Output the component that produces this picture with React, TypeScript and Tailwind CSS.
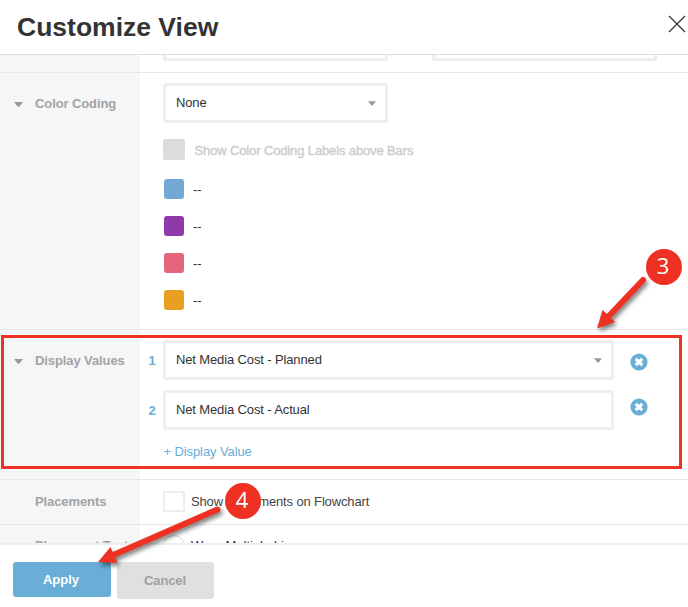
import React from "react";

function Caret({ className = "" }: { className?: string }) {
  return (
    <svg className={className} width="9" height="5" viewBox="0 0 9 5">
      <path d="M0 0H9L5.3 4.6Q4.5 5.2 3.7 4.6Z" fill="currentColor" />
    </svg>
  );
}

function Row({ label, caret, height, top, children }: {
  label?: string; caret?: boolean; height: string; top: string; children: React.ReactNode;
}) {
  return (
    <section className={`flex shrink-0 border-b border-[#e6e7e8] ${height}`}>
      <div className={`flex w-[140px] shrink-0 items-start bg-[#f4f6f8] ${top}`}>
        <span className="flex h-4 w-[35px] items-center pl-[13.5px] text-[#999]">{caret && <Caret />}</span>
        <span className="whitespace-nowrap text-[13px] leading-4 font-bold tracking-[-0.1px] text-[#a3a3a3]">{label}</span>
      </div>
      <div className="min-w-0 flex-1">{children}</div>
    </section>
  );
}

function Field({ text, caret, width }: { text: string; caret?: boolean; width: string }) {
  return (
    <div className={`flex h-10 items-center justify-between rounded-[3px] border-3 border-[#eee] bg-white pr-[9px] pl-[10px] text-[13px] tracking-[-0.13px] text-[#333] ${width}`}>
      <span className="whitespace-nowrap">{text}</span>
      {caret && <Caret className="w-[8px] text-[#999]" />}
    </div>
  );
}

function Remove() {
  return (
    <svg width="18" height="18" viewBox="0 0 18 18">
      <circle cx="9" cy="9" r="8.6" fill="#68aed6" />
      <path d="M5.8 5.8L12.2 12.2M12.2 5.8L5.8 12.2" stroke="#fff" strokeWidth="3.2" />
    </svg>
  );
}

const swatches = ["bg-[#72a8d3]", "bg-[#8e3aaa]", "bg-[#e5657b]", "bg-[#e9a020]"];

function Badge({ n, className }: { n: number; className: string }) {
  return (
    <div className={`absolute flex size-9 items-center justify-center rounded-full bg-[#ef3124] pr-[2px] pb-[3px] font-['Open_Sans',sans-serif] text-[22px] leading-none text-white ${className}`}>
      {n}
    </div>
  );
}

export default function App() {
  return (
    <div className="relative flex h-[607px] w-[688px] flex-col overflow-hidden bg-white font-['Liberation_Sans',Arial,sans-serif]">
      <header className="flex h-[55px] shrink-0 items-center justify-between border-b border-[#dcddde] pr-[2px] pl-[17px]">
        <h1 className="text-[26.5px] leading-8 font-bold text-[#333]">Customize View</h1>
        <svg className="mb-[6px]" width="18" height="18" viewBox="0 0 18 18">
          <path d="M1 1L17 17M17 1L1 17" stroke="#333" strokeWidth="1.2" />
        </svg>
      </header>

      <main className="flex h-[488px] shrink-0 flex-col overflow-hidden">
        <Row height="h-[18px]" top="pt-0">
          <div className="flex gap-[44px] pl-[23px]">
            <div className="h-[5.5px] w-[225px] rounded-b-[3px] border-x-3 border-b-3 border-[#eee]" />
            <div className="h-[5.5px] w-[225px] rounded-b-[3px] border-x-3 border-b-3 border-[#eee]" />
          </div>
        </Row>

        <Row label="Color Coding" caret height="h-[257px]" top="pt-[23px]">
          <div className="pt-[10px] pl-[23px]">
            <Field text="None" caret width="w-[225px]" />
            <div className="mt-[16px] flex h-[21px] items-center">
              <span className="h-[21px] w-[22px] rounded-[2px] bg-[#dcdcdc]" />
              <span className="pt-[2px] pl-[9.5px] text-[13px] tracking-[-0.13px] text-[#ccc] [-webkit-text-stroke:0.4px_#ccc]">Show Color Coding Labels above Bars</span>
            </div>
            <div className="mt-[19px] ml-px flex flex-col gap-[17px]">
              {swatches.map((c) => (
                <div key={c} className="flex h-5 items-center">
                  <span className={`size-5 rounded-[3px] ${c}`} />
                  <span className="pt-[2px] pl-[9px] text-[13px] text-[#333]">--</span>
                </div>
              ))}
            </div>
          </div>
        </Row>

        <Row label="Display Values" caret height="h-[150px]" top="pt-[23px]">
          <div className="flex flex-col gap-[10px] pt-[10px]">
            <div className="flex items-center">
              <span className="w-[23px] pt-px pl-[8.5px] text-[13px] font-bold text-[#68aed6]">1</span>
              <Field text="Net Media Cost - Planned" caret width="w-[451px]" />
              <span className="mt-[4px] pl-[16px]"><Remove /></span>
            </div>
            <div className="flex items-center">
              <span className="w-[23px] pt-px pl-[8.5px] text-[13px] font-bold text-[#68aed6]">2</span>
              <Field text="Net Media Cost - Actual" width="w-[451px]" />
              <span className="-mt-[6px] pl-[16px]"><Remove /></span>
            </div>
            <a className="mt-[4px] pl-[23.5px] text-[13px] leading-4 tracking-[-0.1px] text-[#68aed6]">+ Display Value</a>
          </div>
        </Row>

        <Row label="Placements" height="h-[45px]" top="pt-[14px]">
          <div className="flex items-center pt-[11px] pl-[23px]">
            <span className="h-[21px] w-[22px] border-2 border-[#eee] bg-white" />
            <span className="pl-[6px] text-[13px] tracking-[-0.14px] text-[#444]">Show Placements on Flowchart</span>
          </div>
        </Row>

        <Row label="Placement Text" height="h-[45px]" top="pt-[13px]">
          <div className="flex items-start pt-[10px] pl-[23px]">
            <span className="size-[22px] rounded-full border border-[#ddd] bg-white" />
            <span className="mt-[3px] pl-[6px] text-[13px] leading-4 text-[#333]">Wrap Multiple Lines</span>
          </div>
        </Row>
      </main>

      <footer className="flex flex-1 items-start gap-[6px] border-t-2 border-[#eee] pt-[17px] pl-[13px]">
        <button className="h-[35px] w-[98px] rounded-[3px] bg-[#68aed6] pr-[2px] text-[13px] font-bold text-white">Apply</button>
        <button className="h-[37px] w-[97px] rounded-[3px] bg-[#dfe0e1] pr-px text-[13px] font-bold tracking-[-0.1px] text-[#a0a0a0]">Cancel</button>
      </footer>

      <div className="pointer-events-none absolute top-[335px] left-px h-[134px] w-[681px] border-3 border-[#ef3124]" />
      <svg className="pointer-events-none absolute inset-0 drop-shadow-[2px_3px_2px_rgba(0,0,0,0.5)]" width="688" height="607" viewBox="0 0 688 607" fill="#ef3124" stroke="#ef3124">
        <path d="M643 280L607 318" strokeWidth="6" strokeLinecap="round" />
        <path d="M597 328.5L602.5 310L615 322Z" stroke="none" />
        <path d="M217.5 509.5L111 556" strokeWidth="6" strokeLinecap="round" />
        <path d="M98 562L110.5 547L117.5 563Z" stroke="none" />
      </svg>
      <Badge n={3} className="top-[248.5px] left-[646px]" />
      <Badge n={4} className="top-[482.5px] left-[225px]" />
    </div>
  );
}
